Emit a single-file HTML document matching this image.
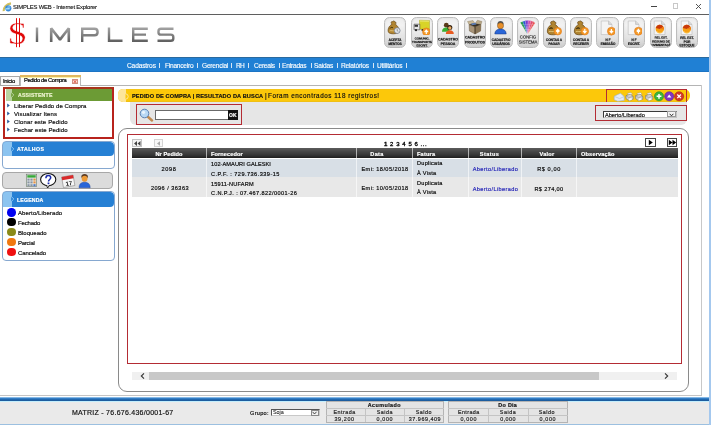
<!DOCTYPE html>
<html><head><meta charset="utf-8">
<style>
*{margin:0;padding:0;box-sizing:border-box}
html,body{width:712px;height:425px;overflow:hidden;background:#fff;font-family:"Liberation Sans",sans-serif;color:#222}
.a{position:absolute}
svg.a{will-change:transform}
.t{white-space:pre;line-height:1;will-change:transform;-webkit-text-stroke:0.18px currentColor}
.btn{position:absolute;top:17.2px;width:22.4px;height:30.4px;border-radius:5.5px;background:linear-gradient(#ececec,#f2f2f2 25%,#e2e2e2 70%,#cdcdcd);border:1px solid #bdbdbd;box-shadow:inset 0 0 1.5px #d0d0d0;overflow:hidden}
.btn .lbl{will-change:transform;-webkit-text-stroke:0.35px currentColor;position:absolute;left:50%;width:60px;margin-left:-30px;text-align:center;white-space:pre;transform:scale(0.5);transform-origin:50% 0;letter-spacing:-0.1px}
.btn svg{position:absolute;left:3px;top:2px}
</style></head><body>
<!-- title bar -->
<svg class="a" style="left:1.5px;top:1.5px" width="10" height="10" viewBox="0 0 10 10"><path d="M1.6 9.2C1.2 6 4.5 1.8 9 1.4" stroke="#d8c060" stroke-width="2.2" fill="none"/><path d="M1.9 8.6C2 6.2 4.6 2.6 8.6 2" stroke="#98b868" stroke-width="0.7" fill="none" stroke-dasharray="1 0.8"/><circle cx="6.3" cy="6.3" r="3.1" fill="#3a8ad8"/><circle cx="6.8" cy="5.4" r="1.6" fill="#6ab0ec"/><rect x="3.6" y="6.3" width="4" height="1.1" fill="#b8f0ff"/></svg>
<div id="ti0" class="a t" style="left:13.2px;top:4.7px;font-size:5.9px;letter-spacing:-0.18px;color:#111;-webkit-text-stroke:0.12px #111">SIMPLES WEB - Internet Explorer</div>
<div class="a" style="left:651px;top:6px;width:6px;height:1px;background:#444"></div>
<div class="a" style="left:673px;top:3px;width:5px;height:6px;border:1px solid #c8c8c8"></div>
<svg class="a" style="left:695px;top:2.5px" width="7" height="7" viewBox="0 0 7 7"><path d="M1 1L6 6M6 1L1 6" stroke="#444" stroke-width="0.9"/></svg>
<div class="a" style="left:0;top:14px;width:709px;height:1px;background:#5f5f5f"></div>
<div class="a" style="left:709.2px;top:0;width:1.6px;height:425px;background:#a4c8ee"></div>

<!-- logo -->
<svg class="a" style="left:0;top:15px" width="180" height="42" viewBox="0 15 180 42">
<defs><linearGradient id="lg" gradientUnits="userSpaceOnUse" x1="0" y1="27" x2="0" y2="42"><stop offset="0" stop-color="#a6a6a6"/><stop offset="1" stop-color="#5e5e5e"/></linearGradient></defs>
<text x="0" y="0" font-family="Liberation Serif" font-size="32" fill="#e00808" stroke="#fff" stroke-width="0.4" transform="translate(7.6 43.6) scale(1.12 1)">S</text>
<path d="M16.5 18.2V47.2M19.5 18.2V47.2" stroke="#e00808" stroke-width="1"/>
<g stroke="url(#lg)" fill="none" stroke-width="2.4" stroke-linejoin="miter">
<path d="M37 27.5V42"/>
<path d="M51.2 42V28.2L60 39.6L68.8 28.2V42" stroke-linejoin="bevel" stroke-width="2.6"/>
<path d="M82.2 42V28.7H94.5C96.8 28.7 97.6 29.7 97.6 31.9C97.6 34.1 96.8 35.2 94.5 35.2H82.2"/>
<path d="M109 27.5V40.8H122.5"/>
<path d="M147.8 28.7H133.2V40.8H147.8M133.2 34.6H146"/>
<path d="M173.5 28.7H161C159.3 28.7 158.5 29.4 158.5 31V32.4C158.5 34 159.3 34.6 161 34.6H170.8C172.5 34.6 173.3 35.3 173.3 37V38.5C173.3 40.1 172.5 40.8 170.8 40.8H157.5"/>
</g>
</svg>

<!-- toolbar -->
<!--TB-->
<div class="btn" style="left:384.00px"><svg id="ic0" width="17" height="16" viewBox="0 0 17 16" style="left:0.2px;top:1px"><path d="M7 5.2C5.6 4 6 2.2 7.5 2.6C8.3 1.6 9.6 1.8 10 3C11.2 2.8 11.3 4.4 10.3 5.3C13.2 6.8 14.5 10.5 13.4 13.2C12.2 15.2 5 15.4 3.6 13.4C2.3 11 3.6 7 7 5.2Z" fill="#b08430" stroke="#5a3a08" stroke-width="0.6"/><path d="M5 9.5C5.8 8.2 7 8 8 9" stroke="#3a2a08" stroke-width="1" fill="none"/><path d="M4.5 12C6 11 8 12.5 9.5 11.5" stroke="#f0d890" stroke-width="0.7" fill="none"/><circle cx="12.2" cy="11.6" r="2.9" fill="#dfe4ea" stroke="#7a8290" stroke-width="0.8"/><path d="M12.2 10V11.8L13.3 12.4" stroke="#555" stroke-width="0.5" fill="none"/></svg><div id="lb0" class="lbl" style="top:20.22px;font-size:6.40px;line-height:8.00px;font-weight:bold;color:#111">ACERTA
MENTOS</div></div>
<div class="btn" style="left:410.55px"><svg id="ic1" width="17" height="16" viewBox="0 0 17 16" style="left:1px;top:0.6px"><path d="M6.5 1.2L16.5 1.5V10.5L6.5 10.2Z" fill="#d8d428" stroke="#a09a10" stroke-width="0.4"/><path d="M7 2L16 2.2" stroke="#f0ee90" stroke-width="0.8"/><path d="M1 5.2H6.8V10.8H1Z" fill="#e6e6e6" stroke="#444" stroke-width="0.6"/><rect x="1.6" y="5.8" width="3.4" height="2" fill="#333"/><circle cx="3" cy="11.2" r="1.1" fill="#222"/><circle cx="9.5" cy="11" r="1.1" fill="#222"/><circle cx="13.3" cy="12.8" r="3.8" fill="#f39a2a" stroke="#e07010" stroke-width="0.5"/><path d="M13.3 15.100000000000001V11.600000000000001M11.600000000000001 13.100000000000001L13.3 11.100000000000001L15.0 13.100000000000001" stroke="#fff" stroke-width="1.2" fill="none"/></svg><div id="lb1" class="lbl" style="top:18.76px;font-size:6.00px;line-height:7.00px;font-weight:bold;color:#111">COMUNIC.
TRANSPORTE
ESCRIT.</div></div>
<div class="btn" style="left:437.10px"><svg id="ic2" width="17" height="16" viewBox="0 0 17 16" style="left:0.6px;top:2.2px"><circle cx="7.3" cy="5.2" r="2.4" fill="#5a3a1a"/><path d="M3 11.8C3 8.8 4.8 7.6 7.3 7.6C9.3 7.6 10.4 8.5 10.6 10V11.8Z" fill="#38b030"/><circle cx="10.8" cy="7.5" r="2.5" fill="#2a1a0a"/><circle cx="10.8" cy="8" r="1.7" fill="#e8a860"/><path d="M6.8 14C6.8 11.3 8.6 10.2 10.8 10.2C13 10.2 14.8 11.3 14.8 14Z" fill="#e85a20"/></svg><div id="lb2" class="lbl" style="top:19.25px;font-size:7.20px;line-height:9.20px;font-weight:bold;color:#111">CADASTRO
PESSOA</div></div>
<div class="btn" style="left:463.65px"><svg id="ic3" width="17" height="16" viewBox="0 0 17 16" style="left:1.6px;top:1.2px"><path d="M3 5.5L9 8L15 5.5L14.6 12L9 15L3.4 12Z" fill="#a89478" stroke="#5a4830" stroke-width="0.4"/><path d="M9 8L15 5.5L14.6 12L9 15Z" fill="#8a7658"/><path d="M3 5.5L1.5 2.5L7 1.5L9 4.5Z" fill="#c8b898" stroke="#6a5838" stroke-width="0.3"/><path d="M15 5.5L16 2.5L11.5 1.2L9 4.5Z" fill="#b8a888" stroke="#6a5838" stroke-width="0.3"/><path d="M3 5.5L9 4.5L15 5.5L9 8Z" fill="#3a3020"/><path d="M5 4.5L9.5 3.8L10.5 5.5L6 6.2Z" fill="#5a7ab0"/><path d="M9 8V15" stroke="#2a2010" stroke-width="0.8"/></svg><div id="lb3" class="lbl" style="top:16.75px;font-size:7.20px;line-height:9.60px;font-weight:bold;color:#111">CADASTRO
PRODUTOS</div></div>
<div class="btn" style="left:490.20px"><svg id="ic4" width="17" height="16" viewBox="0 0 17 16" style="left:1.2px;top:1px"><path d="M5.3 5.5C5.3 3 6.8 2 8.5 2C10.2 2 11.7 3 11.7 5.5Z" fill="#555"/><circle cx="8.5" cy="6.8" r="3.1" fill="#e8902a" stroke="#5a3a1a" stroke-width="0.4"/><path d="M2.8 15C2.8 11.5 5.2 10 8.5 10C11.8 10 14.2 11.5 14.2 15Z" fill="#2a66d8" stroke="#1a3a80" stroke-width="0.5"/></svg><div id="lb4" class="lbl" style="top:19.79px;font-size:6.80px;line-height:7.80px;font-weight:bold;color:#111">CADASTRO
USUÁRIOS</div></div>
<div class="btn" style="left:516.75px"><svg id="ic5" width="17" height="16" viewBox="0 0 17 16" style="left:1.5px;top:1.2px"><g stroke="#fff" stroke-width="0.25"><path d="M8.5 15.5L1.2 3.6L4.2 2.2Z" fill="#1e9a4a"/><path d="M8.5 15.5L3.6 2.4L6.6 1.6Z" fill="#2a5ad0"/><path d="M8.5 15.5L6.2 1.5L9.4 1.3Z" fill="#7a3ac8"/><path d="M8.5 15.5L9.2 1.3L12.2 1.8Z" fill="#c84ab0"/><path d="M8.5 15.5L11.8 1.7L14.8 2.8Z" fill="#e04a70"/><path d="M8.5 15.5L14.4 2.6L16.2 4Z" fill="#e85050"/></g><path d="M2.5 5.5L15.5 5.5" stroke="#fff" stroke-width="0.3" opacity="0.6"/><path d="M3.5 8L14 8M4.5 10.5L13 10.5" stroke="#fff" stroke-width="0.3" opacity="0.6"/></svg><div id="lb5" class="lbl" style="top:16.55px;font-size:8.60px;line-height:9.80px;font-weight:normal;color:#2a2a2a">CONFIG
SISTEMA</div></div>
<div class="btn" style="left:543.30px"><svg id="ic6" width="17" height="16" viewBox="0 0 17 16" style="left:0.8px;top:2px"><g transform="translate(-1 -1.2) scale(1.08)"><path d="M7 5.2C5.6 4 6 2.2 7.5 2.6C8.3 1.6 9.6 1.8 10 3C11.2 2.8 11.3 4.4 10.3 5.3C13.2 6.8 14.5 10.5 13.4 13.2C12.2 15.2 5 15.4 3.6 13.4C2.3 11 3.6 7 7 5.2Z" fill="#b08430" stroke="#5a3a08" stroke-width="0.6"/><path d="M5 9.5C5.8 8.2 7 8 8 9" stroke="#3a2a08" stroke-width="1" fill="none"/><path d="M4.5 12C6 11 8 12.5 9.5 11.5" stroke="#f0d890" stroke-width="0.7" fill="none"/></g><circle cx="12.8" cy="11.2" r="3.8" fill="#f39a2a" stroke="#e07010" stroke-width="0.5"/><path d="M12.8 13.5V10.0M11.100000000000001 11.5L12.8 9.5L14.5 11.5" stroke="#fff" stroke-width="1.2" fill="none"/></svg><div id="lb6" class="lbl" style="top:19.83px;font-size:6.50px;line-height:7.60px;font-weight:bold;color:#111">CONTAS A
PAGAR</div></div>
<div class="btn" style="left:569.85px"><svg id="ic7" width="17" height="16" viewBox="0 0 17 16" style="left:0.8px;top:2px"><g transform="translate(-1 -1.2) scale(1.08)"><path d="M7 5.2C5.6 4 6 2.2 7.5 2.6C8.3 1.6 9.6 1.8 10 3C11.2 2.8 11.3 4.4 10.3 5.3C13.2 6.8 14.5 10.5 13.4 13.2C12.2 15.2 5 15.4 3.6 13.4C2.3 11 3.6 7 7 5.2Z" fill="#b08430" stroke="#5a3a08" stroke-width="0.6"/><path d="M5 9.5C5.8 8.2 7 8 8 9" stroke="#3a2a08" stroke-width="1" fill="none"/><path d="M4.5 12C6 11 8 12.5 9.5 11.5" stroke="#f0d890" stroke-width="0.7" fill="none"/></g><circle cx="12.8" cy="11.2" r="3.8" fill="#f39a2a" stroke="#e07010" stroke-width="0.5"/><path d="M12.8 8.899999999999999V12.399999999999999M11.100000000000001 10.899999999999999L12.8 12.899999999999999L14.5 10.899999999999999" stroke="#fff" stroke-width="1.2" fill="none"/></svg><div id="lb7" class="lbl" style="top:19.83px;font-size:6.50px;line-height:7.60px;font-weight:bold;color:#111">CONTAS A
RECEBER</div></div>
<div class="btn" style="left:596.40px"><svg id="ic8" width="17" height="16" viewBox="0 0 17 16" style="left:1px;top:2px"><path d="M3.2 1H10.6L14 4.4V14.6H3.2Z" fill="#f4f4f4" stroke="#b8b8b8" stroke-width="0.6"/><path d="M10.6 1V4.4H14" fill="#dadada" stroke="#a8a8a8" stroke-width="0.5"/><circle cx="13.4" cy="11.2" r="4" fill="#f39a2a" stroke="#e07010" stroke-width="0.5"/><path d="M13.4 8.899999999999999V12.399999999999999M11.700000000000001 10.899999999999999L13.4 12.899999999999999L15.1 10.899999999999999" stroke="#fff" stroke-width="1.2" fill="none"/></svg><div id="lb8" class="lbl" style="top:19.83px;font-size:6.60px;line-height:7.60px;font-weight:bold;color:#111">N F
EMISSÃO</div></div>
<div class="btn" style="left:622.95px"><svg id="ic9" width="17" height="16" viewBox="0 0 17 16" style="left:1px;top:2px"><path d="M3.2 1H10.6L14 4.4V14.6H3.2Z" fill="#f4f4f4" stroke="#b8b8b8" stroke-width="0.6"/><path d="M10.6 1V4.4H14" fill="#dadada" stroke="#a8a8a8" stroke-width="0.5"/><circle cx="13.4" cy="11.2" r="4" fill="#f39a2a" stroke="#e07010" stroke-width="0.5"/><path d="M13.4 13.5V10.0M11.700000000000001 11.5L13.4 9.5L15.1 11.5" stroke="#fff" stroke-width="1.2" fill="none"/></svg><div id="lb9" class="lbl" style="top:19.83px;font-size:6.60px;line-height:7.60px;font-weight:bold;color:#111">N F
ESCRIT.</div></div>
<div class="btn" style="left:649.50px"><svg id="ic10" width="17" height="16" viewBox="0 0 17 16" style="left:0.8px;top:1.6px"><path d="M3.2 1H10.6L14 4.4V14.6H3.2Z" fill="#f4f4f4" stroke="#b8b8b8" stroke-width="0.6"/><path d="M10.6 1V4.4H14" fill="#dadada" stroke="#a8a8a8" stroke-width="0.5"/><circle cx="8.8" cy="9" r="4.2" fill="#f6a014"/><path d="M8.8 9L4.7 8A4.2 4.2 0 0 1 12.4 6.8Z" fill="#c8380a"/><path d="M8.8 9L12.4 6.8A4.2 4.2 0 0 1 13 9.4Z" fill="#ee7a12"/><path d="M6 11.5A3.5 3.5 0 0 0 11.8 11.5" stroke="#fcd060" stroke-width="0.8" fill="none"/></svg><div id="lb10" class="lbl" style="top:17.91px;font-size:6.00px;line-height:7.60px;font-weight:bold;color:#111">REL EST.
RESUMO DE
MOVIMENTAÇÃO</div></div>
<div class="btn" style="left:676.05px"><svg id="ic11" width="17" height="16" viewBox="0 0 17 16" style="left:0.8px;top:1.6px"><path d="M3.2 1H10.6L14 4.4V14.6H3.2Z" fill="#f4f4f4" stroke="#b8b8b8" stroke-width="0.6"/><path d="M10.6 1V4.4H14" fill="#dadada" stroke="#a8a8a8" stroke-width="0.5"/><circle cx="8.8" cy="9" r="4.2" fill="#f6a014"/><path d="M8.8 9L4.7 8A4.2 4.2 0 0 1 12.4 6.8Z" fill="#c8380a"/><path d="M8.8 9L12.4 6.8A4.2 4.2 0 0 1 13 9.4Z" fill="#ee7a12"/><path d="M6 11.5A3.5 3.5 0 0 0 11.8 11.5" stroke="#fcd060" stroke-width="0.8" fill="none"/></svg><div id="lb11" class="lbl" style="top:17.92px;font-size:6.40px;line-height:7.60px;font-weight:bold;color:#111">REL EST.
POR
ESTOQUE</div></div>
<!--/TB-->

<!-- nav -->
<div class="a" style="left:0;top:57px;width:709px;height:14.6px;background:#2080d4;border-top:1.6px solid #2a6a9e;border-bottom:0.6px solid #1c74c4"></div>
<div id="nv0" class="a t" style="left:126.80px;top:63.1px;font-size:6.6px;color:#fff;-webkit-text-stroke:0.12px #fff;letter-spacing:-0.139px">Cadastros</div>
<div id="nv1" class="a t" style="left:164.80px;top:63.1px;font-size:6.6px;color:#fff;-webkit-text-stroke:0.12px #fff;letter-spacing:-0.244px">Financeiro</div>
<div id="nv2" class="a t" style="left:201.80px;top:63.1px;font-size:6.6px;color:#fff;-webkit-text-stroke:0.12px #fff;letter-spacing:-0.236px">Gerencial</div>
<div id="nv3" class="a t" style="left:235.60px;top:63.1px;font-size:6.6px;color:#fff;-webkit-text-stroke:0.12px #fff;letter-spacing:-0.800px">RH</div>
<div id="nv4" class="a t" style="left:254.20px;top:63.1px;font-size:6.6px;color:#fff;-webkit-text-stroke:0.12px #fff;letter-spacing:-0.267px">Cereais</div>
<div id="nv5" class="a t" style="left:282.00px;top:63.1px;font-size:6.6px;color:#fff;-webkit-text-stroke:0.12px #fff;letter-spacing:-0.272px">Entradas</div>
<div id="nv6" class="a t" style="left:314.40px;top:63.1px;font-size:6.6px;color:#fff;-webkit-text-stroke:0.12px #fff;letter-spacing:-0.260px">Saídas</div>
<div id="nv7" class="a t" style="left:341.20px;top:63.1px;font-size:6.6px;color:#fff;-webkit-text-stroke:0.12px #fff;letter-spacing:-0.189px">Relatórios</div>
<div id="nv8" class="a t" style="left:376.60px;top:63.1px;font-size:6.6px;color:#fff;-webkit-text-stroke:0.12px #fff;letter-spacing:-0.160px">Utilitários</div>
<div class="a" style="left:159.2px;top:63.3px;width:0.7px;height:5px;background:#d8e6f4"></div>
<div class="a" style="left:197.1px;top:63.3px;width:0.7px;height:5px;background:#d8e6f4"></div>
<div class="a" style="left:231.2px;top:63.3px;width:0.7px;height:5px;background:#d8e6f4"></div>
<div class="a" style="left:248.1px;top:63.3px;width:0.7px;height:5px;background:#d8e6f4"></div>
<div class="a" style="left:278.70000000000005px;top:63.3px;width:0.7px;height:5px;background:#d8e6f4"></div>
<div class="a" style="left:310.8px;top:63.3px;width:0.7px;height:5px;background:#d8e6f4"></div>
<div class="a" style="left:337.1px;top:63.3px;width:0.7px;height:5px;background:#d8e6f4"></div>
<div class="a" style="left:373.1px;top:63.3px;width:0.7px;height:5px;background:#d8e6f4"></div>
<div class="a" style="left:406.1px;top:63.3px;width:0.7px;height:5px;background:#d8e6f4"></div>


<!-- tabs -->
<div class="a" style="left:0;top:85px;width:702px;height:1px;background:#b4b4b4"></div>
<div class="a" style="left:0px;top:76.2px;width:19.8px;height:9.4px;background:#fafafa;border:1px solid #a8a8a8"></div>
<div id="tb0" class="a t" style="left:3.00px;top:78.90px;font-size:5.8px;color:#000;-webkit-text-stroke:0.22px #000;letter-spacing:-0.280px">Inicio</div>
<div class="a" style="left:19.8px;top:75.4px;width:61.6px;height:10.6px;background:#fff;border:1px solid #b8b8b8;border-bottom:none;border-top:none"></div>
<div class="a" style="left:19.8px;top:75.4px;width:61.6px;height:1.2px;background:#e0b860"></div>
<div class="a" style="left:20.8px;top:76.6px;width:59.6px;height:0.8px;background:#fcf4a8"></div>
<div id="tb1" class="a t" style="left:23.50px;top:78.30px;font-size:5.8px;color:#000;-webkit-text-stroke:0.2px #000;letter-spacing:-0.373px">Pedido de Compra</div>
<div class="a" style="left:72px;top:78.7px;width:5.9px;height:5.2px;background:#fbe8e2;border:0.8px solid #d09080"></div>
<svg class="a" style="left:72px;top:78.7px" width="6" height="5.2" viewBox="0 0 6 5.2"><path d="M1.6 1.1L4.4 4.1M4.4 1.1L1.6 4.1" stroke="#e04a38" stroke-width="1"/></svg>

<!-- ASSISTENTE -->
<div class="a" style="left:3.2px;top:87.2px;width:111px;height:52px;border:2px solid #b8231c;border-top-color:#a8341c;background:#fff"></div>
<div class="a" style="left:5.6px;top:89.3px;width:106.6px;height:11.8px;background:#6c9b35"></div>
<div class="a" style="left:5.6px;top:89.3px;width:6.6px;height:11.8px;background:#b9d3a0"></div>
<svg class="a" style="left:11px;top:92px" width="4" height="6" viewBox="0 0 4 6"><path d="M0.2 0.4L2.8 3L0.2 5.6" fill="#6c9b35" stroke="#b9d3a0" stroke-width="1"/></svg>
<div id="hd0" class="a t" style="left:18.00px;top:93.20px;font-size:5.2px;font-weight:bold;letter-spacing:0.198px;color:#eef4d0">ASSISTENTE</div>
<svg class="a" style="left:6.5px;top:103px" width="3" height="5" viewBox="0 0 3 5"><path d="M0.2 0.5L2.8 2.5L0.2 4.5Z" fill="#2a5a9a"/></svg>
<div id="as0" class="a t" style="left:14.00px;top:103.10px;font-size:6px;color:#111;letter-spacing:0.086px">Liberar Pedido de Compra</div>
<svg class="a" style="left:6.5px;top:111px" width="3" height="5" viewBox="0 0 3 5"><path d="M0.2 0.5L2.8 2.5L0.2 4.5Z" fill="#2a5a9a"/></svg>
<div id="as1" class="a t" style="left:14.00px;top:111.20px;font-size:6px;color:#111;letter-spacing:0.165px">Visualizar Itens</div>
<svg class="a" style="left:6.5px;top:119px" width="3" height="5" viewBox="0 0 3 5"><path d="M0.2 0.5L2.8 2.5L0.2 4.5Z" fill="#2a5a9a"/></svg>
<div id="as2" class="a t" style="left:14.00px;top:118.80px;font-size:6px;color:#111;letter-spacing:0.148px">Clonar este Pedido</div>
<svg class="a" style="left:6.5px;top:127px" width="3" height="5" viewBox="0 0 3 5"><path d="M0.2 0.5L2.8 2.5L0.2 4.5Z" fill="#2a5a9a"/></svg>
<div id="as3" class="a t" style="left:14.00px;top:126.80px;font-size:6px;color:#111;letter-spacing:0.089px">Fechar este Pedido</div>

<!-- ATALHOS -->
<div class="a" style="left:2.4px;top:140.8px;width:112.2px;height:28.6px;border:1px solid #86a8d0;border-radius:4px;background:#fff;overflow:hidden">
 <div class="a" style="left:0;top:0;width:111px;height:14.4px;background:#2680d4;border-radius:0 4px 4px 0"></div>
 <div class="a" style="left:0;top:0;width:8.6px;height:14.4px;background:#8cc4f0"></div>
</div>
<svg class="a" style="left:10.5px;top:145.5px" width="4" height="6" viewBox="0 0 4 6"><path d="M0.2 0.4L2.8 3L0.2 5.6" fill="#2680d4" stroke="#8cc4f0" stroke-width="1"/></svg>
<div id="hd1" class="a t" style="left:17.20px;top:147.30px;font-size:5.2px;font-weight:bold;letter-spacing:0.434px;color:#fff">ATALHOS</div>

<!-- icon bar -->
<div class="a" style="left:2.2px;top:172.2px;width:111.2px;height:16.6px;border:1px solid #a8a8a8;border-radius:4px;background:#dcdcdc"></div>
<svg class="a" style="left:25px;top:172px" width="68" height="17" viewBox="0 0 68 17">
 <rect x="1.3" y="2.2" width="10.4" height="12.4" fill="#e4e8e4" stroke="#6a7a6a" stroke-width="0.6"/>
 <rect x="2.3" y="3.2" width="8.4" height="2.4" fill="#38a838"/>
 <g fill="#8894a4"><rect x="2.4" y="6.6" width="2.2" height="2"/><rect x="5.4" y="6.6" width="2.2" height="2"/><rect x="8.4" y="6.6" width="2.2" height="2" fill="#e89040"/><rect x="2.4" y="9.4" width="2.2" height="2"/><rect x="5.4" y="9.4" width="2.2" height="2"/><rect x="8.4" y="9.4" width="2.2" height="2" fill="#e89040"/><rect x="2.4" y="12.2" width="2.2" height="2"/><rect x="5.4" y="12.2" width="2.2" height="2"/><rect x="8.4" y="12.2" width="2.2" height="2" fill="#5078c8"/></g>
 <ellipse cx="23.2" cy="7.6" rx="7.6" ry="6.1" fill="#fff" stroke="#111" stroke-width="1.1"/>
 <path d="M21.5 13.2L22.6 16L24.6 13.2" fill="#fff" stroke="#111" stroke-width="0.9"/>
 <path d="M20.9 6.2C20.9 4.4 22 3.6 23.3 3.6C24.7 3.6 25.7 4.4 25.7 5.8C25.7 7.4 23.5 7.6 23.5 9.4" stroke="#1a2aa8" stroke-width="1.5" fill="none"/>
 <rect x="22.6" y="10.5" width="1.8" height="1.7" fill="#1a2aa8"/>
 <g transform="rotate(-10 43 9)"><rect x="37.4" y="4" width="11.6" height="10.6" fill="#f6f6f6" stroke="#777" stroke-width="0.5"/>
 <rect x="37.4" y="4" width="11.6" height="3.2" fill="#d82a2a"/>
 <text x="43.4" y="13.6" font-family="Liberation Sans" font-weight="bold" font-size="6" text-anchor="middle" fill="#222">17</text></g>
 <path d="M59.6 7.2C57 7.2 56.3 5.6 56.3 4.6C56.3 2.9 57.7 2 59.6 2C61.5 2 62.9 2.9 62.9 4.6C62.9 5.6 62.2 7.2 59.6 7.2Z" fill="#5a3a22"/>
 <ellipse cx="59.6" cy="6.8" rx="2.9" ry="3" fill="#ec9a36"/>
 <path d="M54 15.8C54 11.8 56.4 10.2 59.6 10.2C62.8 10.2 65.2 11.8 65.2 15.8Z" fill="#2a66d8" stroke="#1a3a90" stroke-width="0.4"/>
</svg>

<!-- LEGENDA -->
<div class="a" style="left:2.4px;top:191.3px;width:112.2px;height:70px;border:1px solid #86a8d0;border-radius:4px;background:#fff;overflow:hidden">
 <div class="a" style="left:0;top:0;width:111px;height:15px;background:#2680d4;border-radius:0 4px 4px 0"></div>
 <div class="a" style="left:0;top:0;width:8.6px;height:15px;background:#8cc4f0"></div>
</div>
<svg class="a" style="left:10.5px;top:196.3px" width="4" height="6" viewBox="0 0 4 6"><path d="M0.2 0.4L2.8 3L0.2 5.6" fill="#2680d4" stroke="#8cc4f0" stroke-width="1"/></svg>
<div id="hd2" class="a t" style="left:17.30px;top:198.20px;font-size:5.2px;font-weight:bold;letter-spacing:0.168px;color:#fff">LEGENDA</div>
<div class="a" style="left:7px;top:208px;width:8.5px;height:8.5px;border-radius:50%;background:#0000f0"></div>
<div class="a" style="left:7px;top:217.5px;width:8.5px;height:8.5px;border-radius:50%;background:#000"></div>
<div class="a" style="left:7px;top:227.5px;width:8.5px;height:8.5px;border-radius:50%;background:#8a8a18"></div>
<div class="a" style="left:7px;top:237.5px;width:8.5px;height:8.5px;border-radius:50%;background:#f07810"></div>
<div class="a" style="left:7px;top:247.5px;width:8.5px;height:8.5px;border-radius:50%;background:#f01010"></div>
<div id="lg0" class="a t" style="left:18.00px;top:209.80px;font-size:6px;color:#111;letter-spacing:0.107px">Aberto/Liberado</div>
<div id="lg1" class="a t" style="left:18.00px;top:219.90px;font-size:6px;color:#111;letter-spacing:-0.166px">Fechado</div>
<div id="lg2" class="a t" style="left:18.00px;top:229.80px;font-size:6px;color:#111;letter-spacing:0.000px">Bloqueado</div>
<div id="lg3" class="a t" style="left:18.00px;top:239.70px;font-size:6px;color:#111;letter-spacing:-0.249px">Parcial</div>
<div id="lg4" class="a t" style="left:18.00px;top:250.30px;font-size:6px;color:#111;letter-spacing:-0.065px">Cancelado</div>



<!-- content container border -->
<div class="a" style="left:117.5px;top:85px;width:584px;height:311px;border-right:1px solid #c8c8c8"></div>
<div class="a" style="left:0;top:395px;width:702px;height:1px;background:#c4c4c4"></div>

<!-- yellow header -->
<div class="a" style="left:118px;top:88.7px;width:571.5px;height:13.7px;background:linear-gradient(#f2c21a,#fcc80a 10%,#fcc80a 88%,#eabb18);border-radius:5px 6px 6px 5px"></div>
<div class="a" style="left:118px;top:88.7px;width:7.8px;height:13.7px;background:#fde59a;border-radius:5px 0 0 5px"></div>
<svg class="a" style="left:125px;top:92.5px" width="4" height="7" viewBox="0 0 4 7"><path d="M0.5 0.8A2.7 2.7 0 0 1 0.5 6.2" fill="#fcc80a" stroke="#fde59a" stroke-width="1"/></svg>
<div id="yh0" class="a t" style="left:131.60px;top:94.2px;font-size:5.6px;font-weight:bold;letter-spacing:0.128px;color:#111">PEDIDO DE COMPRA | RESULTADO DA BUSCA</div>
<div id="yh1" class="a t" style="left:265px;top:93.2px;font-size:6.3px;color:#111">|</div>
<div id="yh2" class="a t" style="left:268.40px;top:93.4px;font-size:6.3px;letter-spacing:0.551px;color:#111">Foram encontrados 118 registros!</div>

<!-- icon box in header -->
<div class="a" style="left:606.3px;top:88.6px;width:81px;height:14.8px;border:1.8px solid #b42c34"></div>
<svg class="a" style="left:612px;top:90px" width="74" height="12" viewBox="0 0 74 12">
 <path d="M2.2 6.2L8.5 3.2L12.2 6.6V10.4L5.8 11.2L2.2 9.8Z" fill="#e4ecf6" stroke="#9ab0d0" stroke-width="0.6"/><path d="M2.4 6.4L7.6 8.6L12 6.6" stroke="#9ab0d0" stroke-width="0.5" fill="none"/>
 <g id="pr"><path d="M15.2 3.6L18.8 2.4L20.6 4.2L17 5.4Z" fill="#fafafa" stroke="#888" stroke-width="0.4"/><path d="M14 5.6L18.4 4.2L21.2 6.4V9.2L16.8 10.6L14 8.6Z" fill="#d0d0d0" stroke="#666" stroke-width="0.5"/><path d="M14 5.6L16.8 7.6L21.2 6.4" stroke="#777" stroke-width="0.4" fill="none"/><path d="M16.6 8.6L19.8 7.6L20.2 9.8L17 10.8Z" fill="#fff" stroke="#999" stroke-width="0.3"/></g>
 <use href="#pr" x="9.6"/><use href="#pr" x="19.6"/>
 <circle cx="47" cy="6.3" r="4.6" fill="#3cb43c" stroke="#1e8a1e" stroke-width="0.5"/><path d="M47 3.9V8.7M44.6 6.3H49.4" stroke="#fff" stroke-width="1.5"/>
 <circle cx="57.2" cy="6.3" r="4.6" fill="#8234c0" stroke="#5a1890" stroke-width="0.5"/><path d="M55 7.6L57.2 4.4L59.4 7.6Z" fill="#fff"/>
 <circle cx="67.1" cy="6.3" r="4.6" fill="#d43828" stroke="#a01c10" stroke-width="0.5"/><path d="M65.3 4.5L68.9 8.1M68.9 4.5L65.3 8.1" stroke="#fff" stroke-width="1.3"/>
</svg>

<!-- gray search strip -->
<div class="a" style="left:130.4px;top:102.4px;width:557px;height:22.4px;background:#e6e6e6;border-radius:0 0 6px 6px"></div>
<div class="a" style="left:135.5px;top:104px;width:106.5px;height:20.5px;border:1.8px solid #b42c34"></div>
<svg class="a" style="left:139px;top:107.5px" width="15" height="14" viewBox="0 0 15 14">
 <path d="M8 8L13 12.5" stroke="#c08a50" stroke-width="2.4" stroke-linecap="round"/>
 <circle cx="5.5" cy="5.5" r="4.3" fill="#b8d8f4" stroke="#5a80b0" stroke-width="1"/>
 <circle cx="4.5" cy="4.3" r="1.6" fill="#eaf4fc"/>
</svg>
<div class="a" style="left:155px;top:110px;width:73px;height:9.5px;background:#fff;border:1px solid #6a6a6a;border-right:none"></div>
<div class="a" style="left:227.5px;top:110px;width:10px;height:9.5px;background:#111"></div>
<div class="a t" style="left:228.5px;top:112.5px;font-size:5px;font-weight:bold;color:#fff">OK</div>

<div class="a" style="left:595px;top:105.4px;width:92px;height:15.6px;border:1.8px solid #b42c34"></div>
<div class="a" style="left:603px;top:110.5px;width:73.7px;height:7.5px;background:#fff;border:1px solid #c4c4c4;border-top-color:#3a3a3a;border-left-color:#3a3a3a"></div>
<div id="sel0" class="a t" style="left:605.00px;top:112.8px;font-size:5.6px;color:#111;letter-spacing:0.000px">Aberto/Liberado</div>
<div class="a" style="left:667.4px;top:111.3px;width:8.8px;height:6.2px;background:#f4f4f4;border:0.8px solid #999"></div>
<svg class="a" style="left:669.3px;top:112.6px" width="5" height="4" viewBox="0 0 5 4"><path d="M0.6 0.8L2.5 2.8L4.4 0.8" stroke="#111" stroke-width="0.9" fill="none"/></svg>

<!-- rounded panel -->
<div class="a" style="left:118.3px;top:128px;width:571px;height:263.5px;border:1px solid #8a8a8a;border-radius:9px;background:#fff"></div>
<div class="a" style="left:127px;top:133.6px;width:554.6px;height:230.2px;border:1.8px solid #b42c34"></div>

<!-- pager -->
<div class="a" style="left:132.3px;top:138.7px;width:9.5px;height:8.7px;border:1px solid #c4c4c4;background:#f4f4f4"></div>
<svg class="a" style="left:133.3px;top:139.7px" width="8" height="7" viewBox="0 0 8 7"><path d="M4 1L1 3.5L4 6ZM7.5 1L4.5 3.5L7.5 6Z" fill="#444"/></svg>
<div class="a" style="left:154.4px;top:138.7px;width:9px;height:8.7px;border:1px solid #d4d4d4;background:#f8f8f8"></div>
<svg class="a" style="left:155.4px;top:139.7px" width="7" height="7" viewBox="0 0 7 7"><path d="M5 1.3L2 3.5L5 5.7Z" fill="#aaa"/></svg>
<div id="pg0" class="a t" style="left:384.00px;top:141px;font-size:6px;letter-spacing:0.548px;color:#000;-webkit-text-stroke:0.3px #000"><b>1</b> 2 3 4 5 6 ...</div>
<div class="a" style="left:645px;top:138px;width:10.5px;height:9px;border:0.9px solid #444;background:#fff"></div>
<svg class="a" style="left:646px;top:139px" width="9" height="7" viewBox="0 0 9 7"><path d="M2.8 0.8L6.8 3.5L2.8 6.2Z" fill="#000"/></svg>
<div class="a" style="left:666.7px;top:138px;width:10.7px;height:9px;border:0.9px solid #444;background:#fff"></div>
<svg class="a" style="left:667.7px;top:139px" width="9" height="7" viewBox="0 0 9 7"><path d="M0.8 0.8L4.5 3.5L0.8 6.2ZM4.5 0.8L8.2 3.5L4.5 6.2Z" fill="#000"/></svg>

<!-- grid -->
<div id="grid" class="a" style="left:132.2px;top:148px;width:546px;height:49px;font-size:5.6px;color:#222">
 <div class="a" style="left:0;top:0;width:546px;height:9.8px;background:linear-gradient(#5c5c5c,#474747 35%,#363636 70%,#1e1e1e)"></div>
 <div class="a" style="left:0;top:10.5px;width:546px;height:18px;background:#d8dfe6"></div>
 <div class="a" style="left:0;top:28.5px;width:546px;height:20.5px;background:#e8e8e8"></div>
 <div class="a" style="left:74px;top:0;width:1px;height:49px;background:#fff;opacity:.6"></div>
 <div class="a" style="left:224px;top:0;width:1px;height:49px;background:#fff;opacity:.6"></div>
 <div class="a" style="left:279.8px;top:0;width:1px;height:49px;background:#fff;opacity:.6"></div>
 <div class="a" style="left:336px;top:0;width:1px;height:49px;background:#fff;opacity:.6"></div>
 <div class="a" style="left:389.2px;top:0;width:1px;height:49px;background:#fff;opacity:.6"></div>
 <div class="a" style="left:443.4px;top:0;width:1px;height:49px;background:#fff;opacity:.6"></div>
 </div>
<div id="gh1" class="a t" style="left:134.75px;top:152.30px;width:68px;text-align:center;font-size:5.6px;font-weight:bold;color:#fff;letter-spacing:0.065px">Nr Pedido</div>
<div id="gh2" class="a t" style="left:211.00px;top:152.30px;font-size:5.6px;font-weight:bold;color:#fff;letter-spacing:0.111px">Fornecedor</div>
<div id="gh3" class="a t" style="left:352.00px;top:152.30px;width:50px;text-align:center;font-size:5.6px;font-weight:bold;color:#fff;letter-spacing:0.333px">Data</div>
<div id="gh4" class="a t" style="left:416.50px;top:152.30px;font-size:5.6px;font-weight:bold;color:#fff;letter-spacing:0.200px">Fatura</div>
<div id="gh5" class="a t" style="left:465.50px;top:152.30px;width:47px;text-align:center;font-size:5.6px;font-weight:bold;color:#fff;letter-spacing:0.400px">Status</div>
<div id="gh6" class="a t" style="left:522.50px;top:152.30px;width:48px;text-align:center;font-size:5.6px;font-weight:bold;color:#fff;letter-spacing:0.250px">Valor</div>
<div id="gh7" class="a t" style="left:580.50px;top:151.80px;font-size:5.6px;font-weight:bold;color:#fff;letter-spacing:0.167px">Observação</div>
<div id="r1a" class="a t" style="left:132.20px;top:167.20px;width:74px;text-align:center;font-size:5.6px;color:#0a0a0a;letter-spacing:0.665px">2098</div>
<div id="r1b" class="a t" style="left:211.00px;top:161.80px;font-size:5.6px;color:#0a0a0a;letter-spacing:0.085px">102-AMAURI GALESKI</div>
<div id="r1c" class="a t" style="left:211.00px;top:172.10px;font-size:5.6px;color:#0a0a0a;letter-spacing:0.455px">C.P.F. : 729.736.339-15</div>
<div id="r1d" class="a t" style="left:357.20px;top:167.10px;width:56px;text-align:center;font-size:5.6px;color:#0a0a0a;letter-spacing:0.432px">Emi: 18/05/2018</div>
<div id="r1e" class="a t" style="left:416.80px;top:161.00px;font-size:5.6px;color:#0a0a0a;letter-spacing:0.250px">Duplicata</div>
<div id="r1f" class="a t" style="left:416.80px;top:171px;font-size:5.6px;color:#0a0a0a;letter-spacing:0.253px">À Vista</div>
<div id="r1g" class="a t" style="left:468.95px;top:167.30px;width:53px;text-align:center;font-size:5.6px;color:#2a2ab8;letter-spacing:0.394px">Aberto/Liberado</div>
<div id="r1h" class="a t" style="left:521.95px;top:167.30px;width:54px;text-align:center;font-size:5.6px;color:#0a0a0a;letter-spacing:0.585px">R$ 0,00</div>
<div id="r2a" class="a t" style="left:132.70px;top:185.90px;width:74px;text-align:center;font-size:5.6px;color:#0a0a0a;letter-spacing:0.460px">2096 / 36363</div>
<div id="r2b" class="a t" style="left:211.00px;top:182.20px;font-size:5.6px;color:#0a0a0a;letter-spacing:0.182px">15911-NUFARM</div>
<div id="r2c" class="a t" style="left:211.00px;top:190.80px;font-size:5.6px;color:#0a0a0a;letter-spacing:0.393px">C.N.P.J. : 07.467.822/0001-26</div>
<div id="r2d" class="a t" style="left:357.20px;top:186.20px;width:56px;text-align:center;font-size:5.6px;color:#0a0a0a;letter-spacing:0.431px">Emi: 10/05/2018</div>
<div id="r2e" class="a t" style="left:416.80px;top:181.30px;font-size:5.6px;color:#0a0a0a;letter-spacing:0.250px">Duplicata</div>
<div id="r2f" class="a t" style="left:416.80px;top:190px;font-size:5.6px;color:#0a0a0a;letter-spacing:0.253px">À Vista</div>
<div id="r2g" class="a t" style="left:468.95px;top:186.70px;width:53px;text-align:center;font-size:5.6px;color:#2a2ab8;letter-spacing:0.394px">Aberto/Liberado</div>
<div id="r2h" class="a t" style="left:521.70px;top:186.70px;width:54px;text-align:center;font-size:5.6px;color:#0a0a0a;letter-spacing:0.375px">R$ 274,00</div>

<!-- scrollbar -->
<div class="a" style="left:132px;top:371.7px;width:545.4px;height:8px;background:#f0f0f0"></div>
<div class="a" style="left:149.4px;top:372px;width:449.5px;height:7.6px;background:#c8c8c8"></div>
<svg class="a" style="left:137.6px;top:372px" width="10" height="8" viewBox="0 0 10 8"><path d="M6 1.3L3.3 4L6 6.7" stroke="#333" stroke-width="1.1" fill="none"/></svg>
<svg class="a" style="left:661px;top:372px" width="10" height="8" viewBox="0 0 10 8"><path d="M4 1.3L6.7 4L4 6.7" stroke="#333" stroke-width="1.1" fill="none"/></svg>

<!-- status bar -->
<div class="a" style="left:0;top:397.3px;width:709px;height:3.9px;background:linear-gradient(#b8dcf8,#3a84cc 30%,#2066ac 65%,#1a5898)"></div>
<div class="a" style="left:0;top:401.2px;width:709px;height:1px;background:#c4eefc"></div>
<div class="a" style="left:0;top:402.2px;width:709px;height:21.4px;background:#eaeaea"></div>
<div class="a" style="left:0;top:423.5px;width:709px;height:1.5px;background:#9cc0e0"></div>
<div id="sb0" class="a t" style="left:72.40px;top:408.80px;font-size:7px;color:#111;letter-spacing:0.262px">MATRIZ - 76.676.436/0001-67</div>
<div id="sb1" class="a t" style="left:249.80px;top:410.70px;font-size:5.6px;color:#111;letter-spacing:0.280px">Grupo:</div>
<div class="a" style="left:270.6px;top:409px;width:49.2px;height:7px;background:#fff;border:1px solid #c8c8c8;border-top-color:#555;border-left-color:#555"></div>
<div id="sb2" class="a t" style="left:272.5px;top:410.3px;font-size:5.4px;color:#111;letter-spacing:0px;-webkit-text-stroke:0.05px #111">Soja</div>
<div class="a" style="left:310.5px;top:409.5px;width:8.5px;height:6px;background:#f0f0f0;border:1px solid #888"></div>
<svg class="a" style="left:312px;top:410.5px" width="5" height="4" viewBox="0 0 5 4"><path d="M0.5 0.8L2.5 3L4.5 0.8" stroke="#222" stroke-width="0.8" fill="none"/></svg>
<div class="a" style="left:325.5px;top:401px;width:118.69999999999999px;height:21.5px;border:1px solid #b4b4b4;background:#e4e4e4"></div>
<div class="a" style="left:325.5px;top:408.3px;width:118.69999999999999px;height:1px;background:#c4c4c4"></div>
<div class="a" style="left:325.5px;top:415.2px;width:118.69999999999999px;height:1px;background:#c4c4c4"></div>
<div class="a" style="left:364.7px;top:408.3px;width:1px;height:14px;background:#c4c4c4"></div>
<div class="a" style="left:404.4px;top:408.3px;width:1px;height:14px;background:#c4c4c4"></div>
<div id="ac0" class="a t" style="left:325.40px;top:403.20px;width:118.69999999999999px;text-align:center;font-size:5.4px;font-weight:bold;color:#111;letter-spacing:0.425px">Acumulado</div>
<div id="ac1" class="a t" style="left:325.10px;top:410.00px;width:39.19999999999999px;text-align:center;font-size:5.4px;color:#222;letter-spacing:0.468px">Entrada</div>
<div id="ac2" class="a t" style="left:325.30px;top:417.00px;width:39.19999999999999px;text-align:center;font-size:5.4px;color:#222;letter-spacing:0.640px">39,200</div>
<div id="ac3" class="a t" style="left:365.20px;top:410.00px;width:39.69999999999999px;text-align:center;font-size:5.4px;color:#222;letter-spacing:0.450px">Saida</div>
<div id="ac4" class="a t" style="left:364.90px;top:417.00px;width:39.69999999999999px;text-align:center;font-size:5.4px;color:#222;letter-spacing:0.600px">0,000</div>
<div id="ac5" class="a t" style="left:404.40px;top:410.00px;width:39.80000000000001px;text-align:center;font-size:5.4px;color:#222;letter-spacing:0.500px">Saldo</div>
<div id="ac6" class="a t" style="left:405.10px;top:417.00px;width:39.80000000000001px;text-align:center;font-size:5.4px;color:#222;letter-spacing:0.511px">37.969,409</div>
<div class="a" style="left:448.3px;top:401px;width:119.49999999999994px;height:21.5px;border:1px solid #b4b4b4;background:#e4e4e4"></div>
<div class="a" style="left:448.3px;top:408.3px;width:119.49999999999994px;height:1px;background:#c4c4c4"></div>
<div class="a" style="left:448.3px;top:415.2px;width:119.49999999999994px;height:1px;background:#c4c4c4"></div>
<div class="a" style="left:487.8px;top:408.3px;width:1px;height:14px;background:#c4c4c4"></div>
<div class="a" style="left:528px;top:408.3px;width:1px;height:14px;background:#c4c4c4"></div>
<div id="dd0" class="a t" style="left:447.60px;top:402.80px;width:119.49999999999994px;text-align:center;font-size:5.4px;font-weight:bold;color:#111;letter-spacing:0.280px">Do Dia</div>
<div id="dd1" class="a t" style="left:449.10px;top:410.00px;width:39.5px;text-align:center;font-size:5.4px;color:#222;letter-spacing:0.398px">Entrada</div>
<div id="dd2" class="a t" style="left:449.10px;top:417.00px;width:39.5px;text-align:center;font-size:5.4px;color:#222;letter-spacing:0.600px">0,000</div>
<div id="dd3" class="a t" style="left:487.90px;top:410.00px;width:40.19999999999999px;text-align:center;font-size:5.4px;color:#222;letter-spacing:0.550px">Saida</div>
<div id="dd4" class="a t" style="left:487.70px;top:417.00px;width:40.19999999999999px;text-align:center;font-size:5.4px;color:#222;letter-spacing:0.450px">0,000</div>
<div id="dd5" class="a t" style="left:526.90px;top:410.00px;width:39.799999999999955px;text-align:center;font-size:5.4px;color:#222;letter-spacing:0.550px">Saldo</div>
<div id="dd6" class="a t" style="left:527.70px;top:417.00px;width:39.799999999999955px;text-align:center;font-size:5.4px;color:#222;letter-spacing:0.650px">0,000</div>

</body></html>
